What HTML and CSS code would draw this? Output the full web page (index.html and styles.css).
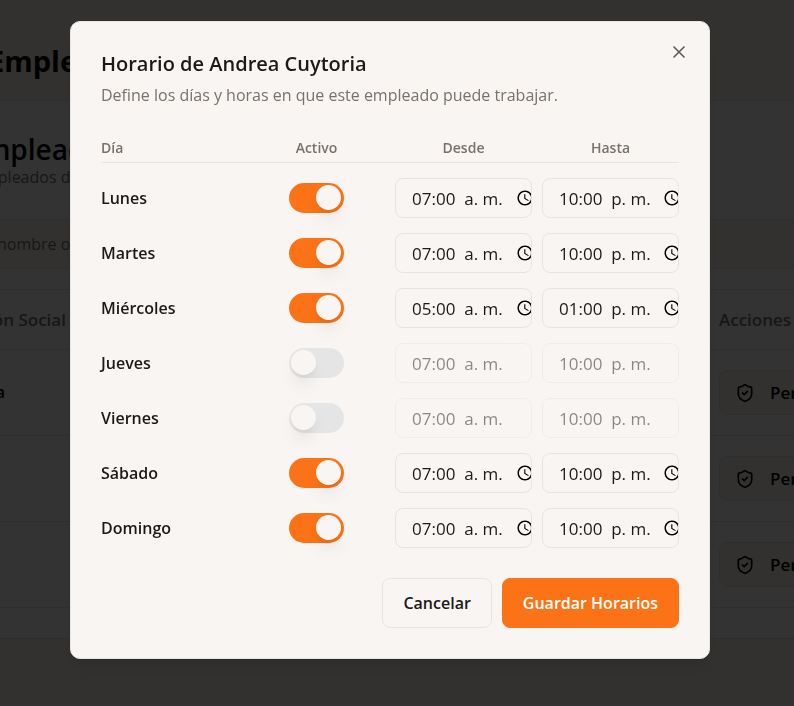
FILE: index.html
```
<!DOCTYPE html>
<html lang="es">
<head>
<meta charset="utf-8">
<meta name="viewport" content="width=device-width, initial-scale=1">
<title>Horario de Andrea Cuytoria</title>
<link rel="stylesheet" href="styles.css">
</head>
<body>
<svg class="sprite" aria-hidden="true">
  <symbol id="clock" viewBox="0 0 24 24"><path d="M11.99 2C6.47 2 2 6.48 2 12s4.47 10 9.99 10C17.52 22 22 17.52 22 12S17.52 2 11.99 2zM12 20c-4.42 0-8-3.58-8-8s3.58-8 8-8 8 3.58 8 8-3.58 8-8 8zm.5-13H11v6l5.250 3.150.75-1.230-4.500-2.670z"/></symbol>
  <symbol id="shield" viewBox="0 0 24 24"><path d="M20 13c0 5-3.500 7.500-7.660 8.950a1 1 0 0 1-.67-.01C7.500 20.500 4 18 4 13V6a1 1 0 0 1 1-1c2 0 4.500-1.200 6.240-2.720a1.170 1.170 0 0 1 1.520 0C14.510 3.810 17 5 19 5a1 1 0 0 1 1 1z"/><path d="m9 12 2 2 4-4"/></symbol>
</svg>

<div class="page" inert>
  <header class="topbar"><h1>Empleados</h1></header>
  <main class="card">
    <div class="card-head">
      <h2>Empleados</h2>
      <p>empleados de</p>
    </div>
    <div class="search">nombre o</div>
    <div class="list">
      <div class="list-row list-head"><span>Razón Social</span><span class="actions">Acciones</span></div>
      <div class="list-row"><b>Andrea</b><button class="perm" type="button"><svg><use href="#shield"/></svg>Permisos</button></div>
      <div class="list-row"><b></b><button class="perm" type="button"><svg><use href="#shield"/></svg>Permisos</button></div>
      <div class="list-row"><b></b><button class="perm" type="button"><svg><use href="#shield"/></svg>Permisos</button></div>
    </div>
  </main>
</div>

<div class="overlay">
  <form class="dialog" role="dialog" aria-modal="true" aria-labelledby="dlg-title">
    <button class="close" type="button" aria-label="Cerrar"><svg viewBox="0 0 24 24"><path d="M18 6 6 18M6 6l12 12"/></svg></button>
    <div class="dialog-head">
      <h2 id="dlg-title">Horario de Andrea Cuytoria</h2>
      <p>Define los días y horas en que este empleado puede trabajar.</p>
    </div>
    <table class="schedule">
      <thead><tr><th scope="col">Día</th><th scope="col">Activo</th><th scope="col">Desde</th><th scope="col">Hasta</th></tr></thead>
      <tbody>
        <tr>
          <th scope="row">Lunes</th>
          <td><input class="switch" type="checkbox" role="switch" aria-label="Lunes activo" checked></td>
          <td><label class="time"><input type="text" aria-label="Lunes desde" value="07:00  a. m."><svg><use href="#clock"/></svg></label></td>
          <td><label class="time"><input type="text" aria-label="Lunes hasta" value="10:00  p. m."><svg><use href="#clock"/></svg></label></td>
        </tr>
        <tr>
          <th scope="row">Martes</th>
          <td><input class="switch" type="checkbox" role="switch" aria-label="Martes activo" checked></td>
          <td><label class="time"><input type="text" aria-label="Martes desde" value="07:00  a. m."><svg><use href="#clock"/></svg></label></td>
          <td><label class="time"><input type="text" aria-label="Martes hasta" value="10:00  p. m."><svg><use href="#clock"/></svg></label></td>
        </tr>
        <tr>
          <th scope="row">Miércoles</th>
          <td><input class="switch" type="checkbox" role="switch" aria-label="Miércoles activo" checked></td>
          <td><label class="time"><input type="text" aria-label="Miércoles desde" value="05:00  a. m."><svg><use href="#clock"/></svg></label></td>
          <td><label class="time"><input type="text" aria-label="Miércoles hasta" value="01:00  p. m."><svg><use href="#clock"/></svg></label></td>
        </tr>
        <tr>
          <th scope="row">Jueves</th>
          <td><input class="switch" type="checkbox" role="switch" aria-label="Jueves activo"></td>
          <td><label class="time off"><input type="text" aria-label="Jueves desde" value="07:00  a. m." disabled></label></td>
          <td><label class="time off"><input type="text" aria-label="Jueves hasta" value="10:00  p. m." disabled></label></td>
        </tr>
        <tr>
          <th scope="row">Viernes</th>
          <td><input class="switch" type="checkbox" role="switch" aria-label="Viernes activo"></td>
          <td><label class="time off"><input type="text" aria-label="Viernes desde" value="07:00  a. m." disabled></label></td>
          <td><label class="time off"><input type="text" aria-label="Viernes hasta" value="10:00  p. m." disabled></label></td>
        </tr>
        <tr>
          <th scope="row">Sábado</th>
          <td><input class="switch" type="checkbox" role="switch" aria-label="Sábado activo" checked></td>
          <td><label class="time"><input type="text" aria-label="Sábado desde" value="07:00  a. m."><svg><use href="#clock"/></svg></label></td>
          <td><label class="time"><input type="text" aria-label="Sábado hasta" value="10:00  p. m."><svg><use href="#clock"/></svg></label></td>
        </tr>
        <tr>
          <th scope="row">Domingo</th>
          <td><input class="switch" type="checkbox" role="switch" aria-label="Domingo activo" checked></td>
          <td><label class="time"><input type="text" aria-label="Domingo desde" value="07:00  a. m."><svg><use href="#clock"/></svg></label></td>
          <td><label class="time"><input type="text" aria-label="Domingo hasta" value="10:00  p. m."><svg><use href="#clock"/></svg></label></td>
        </tr>
      </tbody>
    </table>
    <div class="dialog-foot">
      <button class="btn" type="button">Cancelar</button>
      <button class="btn primary" type="submit">Guardar Horarios</button>
    </div>
  </form>
</div>
</body>
</html>
```
FILE: styles.css
```
:root {
  --bg: #f9f5f2;
  --ink: #1c1917;
  --muted: #78716c;
  --line: #e7e5e4;
  --orange: #fb7316;
}

* { box-sizing: border-box; }

body {
  margin: 0;
  min-height: 100vh;
  overflow: hidden;
  background: #faf5ee;
  color: var(--ink);
  font: 16px/25px "Open Sans", "Noto Sans", sans-serif;
}

h1, h2, p { margin: 0; }
button, input { font: inherit; color: inherit; }
.sprite { display: none; }

/* Page behind the dialog */
.page { margin-left: -40px; overflow: hidden; color: #000; }
.topbar {
  height: 101px;
  padding: 41px 28px 0;
  border-bottom: 1px solid var(--line);
}
.topbar h1 { font-size: 29px; line-height: 40px; font-weight: 700; }
.card { background: #fff; border-bottom: 1px solid var(--line); padding-bottom: 30px; }
.card-head { padding: 32px 8px 30px; }
.card-head h2 { font-size: 28px; line-height: 32px; font-weight: 600; }
.card-head p { padding-left: 6px; color: var(--muted); line-height: 24px; }
.search {
  height: 50px;
  padding: 12px 36px;
  background: #faf5ee;
  border: 1px solid var(--line);
  color: var(--muted);
}
.list { margin-top: 20px; border-top: 1px solid var(--line); }
.list-row {
  display: flex;
  align-items: center;
  justify-content: space-between;
  height: 86px;
  border-bottom: 1px solid var(--line);
}
.list-head { height: 60px; padding-left: 4px; color: var(--muted); font-size: 17px; font-weight: 600; }
.list-row > :last-child { flex: none; width: 120px; margin-right: -45px; }
.list-row b { margin-left: -11px; font-weight: 600; }
.list-row .perm {
  display: flex;
  align-items: center;
  gap: 15px;
  height: 45px;
  padding: 0 15px;
  overflow: hidden;
  border: 1px solid var(--line);
  border-radius: 8px;
  background: #faf5ee;
  font-size: 17px;
  font-weight: 600;
}
.perm svg {
  flex: none;
  width: 20px;
  height: 20px;
  fill: none;
  stroke: currentColor;
  stroke-width: 2;
  stroke-linecap: round;
  stroke-linejoin: round;
}

.overlay {
  position: fixed;
  inset: 0;
  display: flex;
  align-items: flex-start;
  justify-content: center;
  padding: 21px 30px 21px 16px;
  background: rgba(0, 0, 0, .8);
}
.dialog {
  position: relative;
  flex: 0 1 640px;
  min-width: 0;
  padding: 30px;
  background: var(--bg);
  border: 1px solid var(--line);
  border-radius: 10px;
  box-shadow: 0 12px 18px -4px rgba(0, 0, 0, .1), 0 4px 6px -4px rgba(0, 0, 0, .1);
}
.dialog-head { padding-bottom: 30px; }
.dialog-head h2 { font-size: 20px; line-height: 24px; font-weight: 600; }
.dialog-head p { margin-top: 7px; color: var(--muted); }
.close {
  position: absolute;
  top: 20px;
  right: 20px;
  display: flex;
  padding: 0;
  border: 0;
  background: none;
  opacity: .7;
}
.close svg { width: 20px; height: 20px; fill: none; stroke: currentColor; stroke-width: 2; stroke-linecap: round; }

.schedule, .schedule thead, .schedule tbody { display: block; }
.schedule tr {
  display: grid;
  grid-template-columns: repeat(4, minmax(0, 1fr));
  gap: 10px;
  align-items: center;
}
.schedule th, .schedule td { padding: 0; text-align: left; font-weight: 600; }
.schedule thead tr { padding-bottom: 4px; border-bottom: 1px solid var(--line); }
.schedule thead th { font-size: 14px; line-height: 20px; color: var(--muted); }
.schedule thead th + th { text-align: center; }
.schedule tbody tr { margin-top: 15px; }
.schedule td { display: flex; justify-content: center; }

.switch {
  appearance: none;
  width: 55px;
  height: 30px;
  margin: 0;
  padding: 2px;
  border-radius: 15px;
  background: #e5e5e5;
}
.switch::before {
  content: "";
  display: block;
  width: 25px;
  height: 25px;
  border-radius: 50%;
  background: var(--bg);
  box-shadow: 0 12px 18px -4px rgba(0, 0, 0, .1), 0 5px 8px -5px rgba(0, 0, 0, .1);
}
.switch:checked { background: var(--orange); }
.switch:checked::before { margin-left: 25px; }

.time {
  display: flex;
  align-items: center;
  width: 100%;
  height: 40px;
  padding-left: 16px;
  overflow: hidden;
  border: 1px solid var(--line);
  border-radius: 8px;
  font-size: 17px;
  font-weight: 400;
}
.time.off { opacity: .5; }
.time input {
  flex: none;
  width: 104px;
  height: 25px;
  padding: 0;
  border: 0;
  outline: 0;
  background: none;
  white-space: pre;
}
.time svg { flex: none; width: 18px; height: 18px; fill: #000; }

.dialog-foot { display: flex; justify-content: flex-end; gap: 10px; margin-top: 30px; }
.btn {
  height: 50px;
  padding: 0 20px;
  border: 1px solid var(--line);
  border-radius: 8px;
  background: var(--bg);
  font-weight: 600;
}
.btn.primary { border-color: var(--orange); background: var(--orange); color: #fff; }
```
